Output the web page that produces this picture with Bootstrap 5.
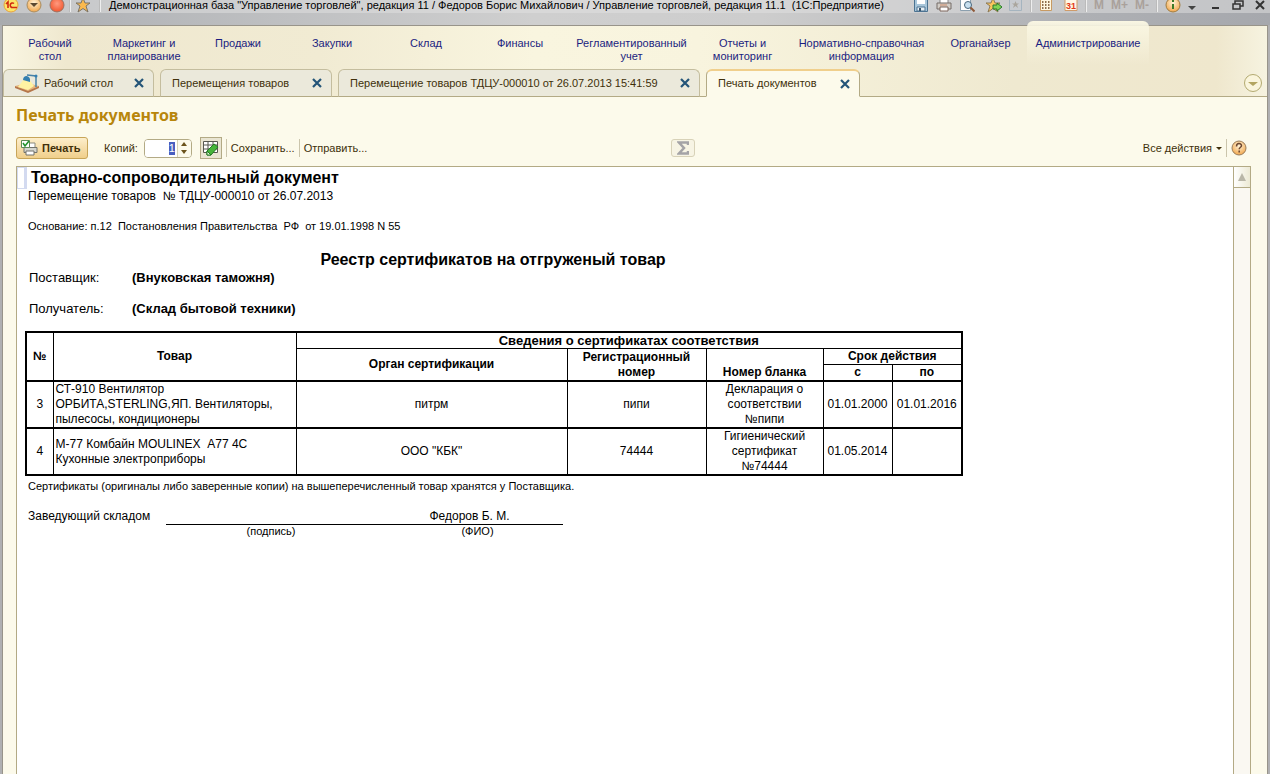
<!DOCTYPE html>
<html lang="ru">
<head>
<meta charset="utf-8">
<meta name="viewport" content="width=device-width, initial-scale=1">
<title>Печать документов</title>
<link href="https://cdn.jsdelivr.net/npm/bootstrap@5.3.0/dist/css/bootstrap.min.css" rel="stylesheet">
<style>
:root{--ink:#40300a;--navy:#1b1d80;--line:#b3aa85;--paper:#fcfaeb}
body{font-family:"Liberation Sans",Arial,sans-serif;font-size:11px;line-height:13px;color:var(--ink);background:#b0b0b2;overflow:hidden}
button,input{font:inherit;color:inherit}
.app-window{min-height:100vh}
.title-strip{height:25px;padding:0 5px 15px 3px;background:linear-gradient(90deg,#a9abae 0,#b4b6b9 10%,#cfcfcf 42%,#cdcdcd 60%,#aeb0b4 85%,#a6a8ad 100%);box-shadow:inset 0 13px #e2e2e280;color:#000}
.title-strip button,.plain-btn{border:0;background:none;padding:0;display:flex;align-items:center;line-height:13px}
.title-strip .quick{gap:7px}
.title-strip .sys{gap:7px}
.app-title{font-size:11px;line-height:14px;white-space:nowrap}
.bar-sep{width:1px;height:14px;background:#bbb;border-right:1px solid #eee;box-sizing:content-box}
.mem{font-size:12px;font-weight:bold;color:#aaa19b}
.shell{margin:0 2px;border:solid #98948a;border-width:1px 1px 0 1px;background:var(--paper)}
.head-area{background:linear-gradient(90deg,#faf6e2 0,#efe8cf 5%,#f1ebd3 25%,#f9f5df 42%,#f8f4de 55%,#efe9d0 80%,#efe7cd 96%,#f6f3e0 100%);border-bottom:1px solid var(--line)}
.sections{height:43px}
.sections a{color:var(--navy);text-decoration:none;text-align:center;padding-top:11px;flex:0 0 auto}
.sec-a{width:94px}.sec-b{width:129px}.sec-c{width:93px}.sec-d{width:145px}.sec-e{width:122px}
.sections a.chosen{margin-top:-5px;padding-top:16px;border-radius:6px 6px 0 0;background:linear-gradient(#faf7e3,#f3eed800);height:44px}
.tabs-row{height:28px;gap:6px;margin-bottom:-1px}
.doc-tab{height:28px;background:#ebe9db;border:1px solid #c4bd9e;border-bottom-color:var(--line);border-radius:6px 6px 0 0;padding:0 9px 0 11px;color:var(--ink);flex:0 0 auto}
.doc-tab.current{background:var(--paper);border-color:var(--line);border-top:2px solid #f0cf8c;border-bottom-color:var(--paper)}
.doc-tab a{color:inherit;text-decoration:none;white-space:nowrap}
.tab-1{width:151px}.tab-2{width:172px}.tab-3{width:362px}.tab-4{width:154px}
.work{padding:9px 16px 0 13px}
.form-title{font:bold 16px/18px "Noto Sans",Tahoma,sans-serif;color:#b8860b;margin:0}
.tools{height:24px;margin:12px 0 6px;white-space:nowrap}
.tools-left{flex:0 0 53%}
.print-btn{width:72px;height:22px;padding:0 4px;border:1px solid #c8a558;border-radius:3px;background:linear-gradient(#fdeecb,#f0cf8b);font-weight:bold;color:#40300a}
.copies{width:48px;height:19px;margin-left:6px;border:1px solid var(--line);border-radius:4px;background:#fff;overflow:hidden}
.copies input{width:32px;border:0;outline:0;padding:0 2px 0 0;text-align:right;background:#fff}
.copies input::selection{background:#4a5fc0;color:#fff}
.spin{width:15px;border-left:1px solid #d8d2b6;background:var(--paper)}
.spin button{border:0;padding:0;background:none;height:8px;display:flex;align-items:center;justify-content:center}
.edit-btn{width:22px;height:22px;padding:0;border:1px solid var(--line);background:#e9e5d2}
.tool-sep{width:1px;height:18px;background:#cbc5ac}
.sum-btn{width:24px;height:18px;border:1px solid #d8d2b8;border-radius:3px;background:#f7f4e4;padding:0;display:flex;align-items:center;justify-content:center}
.sheet-frame{border:1px solid var(--line);border-bottom:0;background:#fff;color:#000;min-height:calc(100vh - 166px)}
.scroll-track{width:17px;border-left:1px solid var(--line);background:#faf8f2;flex:0 0 auto}
.scroll-track button{width:16px;height:21px;border:0;border-bottom:1px solid var(--line);background:linear-gradient(90deg,#fff,#ece9d4);padding:0;display:flex;align-items:center;justify-content:center}
.cursor-cell{width:10px;height:22px;border:1px solid #d3daf0;border-right-width:3px;flex:0 0 auto}
.sheet{padding:0 0 20px 8px;min-width:0}
.head-line{height:22px;margin-left:-8px}
.doc-name{font-size:16px;line-height:22px;font-weight:bold;margin:0 0 0 4px}
.note-line{padding-left:3px}
.t12{font-size:12px;line-height:15px}
.t13{font-size:13px;line-height:15px}
.reg-title{font-size:16px;line-height:18px;font-weight:bold;text-align:center;margin:18px 0 1px;width:936px}
.party{display:flex;padding-left:4px}
.party dt{width:103px;font-weight:normal}
.party dd{margin:0;font-weight:bold}
.certs{width:937px;table-layout:fixed;border-collapse:collapse;border:2px solid #000;font-size:12px;line-height:15px;text-align:center;margin-top:15px;color:#000}
.certs th,.certs td{border:1px solid #000;padding:0 1px;vertical-align:middle}
.certs tbody tr{border-top:2px solid #000;height:46px}
.certs .goods{text-align:left;padding-left:2px}
.certs thead tr{height:16px}
.certs .group{font-size:13px}
.after-table{margin-top:4px}
.sign-row{padding-left:3px;margin-top:16px}
.role{width:138px}
.sign-grid{display:grid;grid-template-columns:210px 187px;text-align:center}
.sign-grid .filled{border-bottom:1px solid #000}
.sign-grid .fio{padding-left:16px}
</style>
<script src="https://cdn.jsdelivr.net/npm/bootstrap@5.3.0/dist/js/bootstrap.bundle.min.js"></script>
</head>
<body>
<svg class="position-absolute" width="0" height="0" aria-hidden="true">
<defs>
<radialGradient id="or" cx=".5" cy=".35" r=".7"><stop offset="0" stop-color="#fff3d8"/><stop offset="1" stop-color="#f0a040"/></radialGradient>
<radialGradient id="rd" cx=".5" cy=".4" r=".6"><stop offset="0" stop-color="#ff9a80"/><stop offset="1" stop-color="#f0562e"/></radialGradient>
<symbol id="cross" viewBox="0 0 10 10"><path d="M1 1l8 8M9 1L1 9" stroke="#235478" stroke-width="2.2"/></symbol>
</defs>
</svg>
<div class="app-window">
<header class="title-strip d-flex align-items-center">
  <div class="quick d-flex align-items-center">
  <button aria-label="1С"><svg width="16" height="16"><circle cx="8" cy="8" r="7" fill="#fce46a" stroke="#e8a33c"/><path d="M3 7l2-2v6M11 6.500a2.300 2.300 0 1 0-1 4h4" fill="none" stroke="#d22a12" stroke-width="1.600"/></svg></button>
  <button aria-label="Главное меню"><svg width="16" height="16"><circle cx="8" cy="8" r="7" fill="url(#or)" stroke="#a98d62"/><path d="M4 6h8l-4 4z" fill="#5c4a32"/></svg></button>
  <button aria-label="Стоп"><svg width="16" height="16"><circle cx="8" cy="8" r="7" fill="url(#rd)" stroke="#987466"/></svg></button>
  </div>
  <span class="bar-sep ms-1"></span>
  <button class="ms-1" aria-label="Избранное"><svg width="16" height="16"><path d="M8 1l2 5h5l-4 3 2 6-5-3.500-5 3.500 2-6-4-3h5z" fill="#fbb94d" stroke="#7d7464"/></svg></button>
  <span class="bar-sep mx-2"></span>
  <span class="app-title">Демонстрационная база "Управление торговлей", редакция 11 / Федоров Борис Михайлович / Управление торговлей, редакция 11.1&nbsp; (1С:Предприятие)</span>
  <div class="sys ms-auto d-flex align-items-center">
    <button aria-label="Сохранить"><svg width="16" height="16"><path d="M1.500 1.500h13v13h-13z" fill="#a8c6da" stroke="#4c7391"/><path d="M4 2h8v5H4z" fill="#fff"/><path d="M4 10h8v4H4z" fill="#e9f0f4" stroke="#4c7391"/><path d="M6 11h2v3H6z" fill="#38566e"/></svg></button>
    <button aria-label="Печать"><svg width="16" height="16"><path d="M4 1h8v6H4z" fill="#fff" stroke="#888"/><path d="M1 6h14v6H1z" fill="#d2cdc6" stroke="#746d68"/><path d="M4 10h8v4H4z" fill="#fff" stroke="#7c645b"/><path d="M4 8h7" stroke="#d08c6a"/></svg></button>
    <button aria-label="Предварительный просмотр"><svg width="16" height="16"><path d="M1.500.5h10v13h-10z" fill="#fff" stroke="#8b9fae"/><circle cx="9" cy="8" r="3.500" fill="#c8e0f0" stroke="#49677d"/><path d="M11.500 10.500l4 4" stroke="#8f5a3a" stroke-width="2"/></svg></button>
    <button class="ms-1" aria-label="Добавить в избранное"><svg width="16" height="16"><path d="M7 1l2 5h5l-4 3 2 6-5-3.500L2 15l2-6-4-3h5z" fill="#fbc55d" stroke="#8f7b55"/><path d="M7 8h4V6l5 4-5 4v-2H7z" fill="#82d454" stroke="#27782b"/></svg></button>
    <button aria-label="Список избранного"><svg width="14" height="14"><path d="M.5.5h12v12H.5z" fill="#c8cbd0" stroke="#a5b4bf"/><path d="M6.500 3l1 2.500H10L8 7l1 3-2.500-2L4 10l1-3-2-1.500h2.500z" fill="#aaa59d"/></svg></button>
    <span class="bar-sep"></span>
    <button aria-label="Калькулятор"><svg width="14" height="14"><path d="M1.500.5h11v12h-11z" fill="#fff7df" stroke="#c79a63"/><path d="M3 4h8M3 7h8M3 10h8" stroke="#69431f" stroke-width="1.500" stroke-dasharray="1.500 1.500"/></svg></button>
    <button class="ms-1" aria-label="Календарь"><svg width="14" height="14"><path d="M1 .5h12v12H1z" fill="#fff7e5" stroke="#ce9b6a"/><text x="7" y="11" font-size="9" font-weight="bold" text-anchor="middle" fill="#e23917">31</text></svg></button>
    <span class="bar-sep"></span>
    <button class="mem">M</button><button class="mem">M+</button><button class="mem">M-</button>
    <span class="bar-sep"></span>
    <button aria-label="О программе"><svg width="16" height="16"><circle cx="8" cy="8" r="7" fill="url(#or)" stroke="#a07d42"/><path d="M8 7v5M8 3v2" stroke="#3d7a28" stroke-width="2"/></svg></button>
    <button aria-label="Ещё"><svg width="8" height="12"><path d="M0 7h8l-4 4z" fill="#444"/></svg></button>
    <button class="ms-2" aria-label="Свернуть"><svg width="10" height="12"><path d="M1 9h7" stroke="#333" stroke-width="2"/></svg></button>
    <button class="ms-1" aria-label="Восстановить"><svg width="12" height="12"><path d="M1 5h7v5H1zM3 5V2h8v5H8" fill="none" stroke="#333" stroke-width="1.500"/></svg></button>
    <button class="ms-1" aria-label="Закрыть"><svg width="10" height="10"><path d="M1 1l8 8M9 1L1 9" stroke="#333" stroke-width="2"/></svg></button>
  </div>
</header>
<div class="shell">
  <div class="head-area">
    <nav class="sections d-flex" aria-label="Разделы">
      <a href="#" class="sec-a">Рабочий<br>стол</a>
      <a href="#" class="sec-a">Маркетинг и<br>планирование</a>
      <a href="#" class="sec-a">Продажи</a>
      <a href="#" class="sec-a">Закупки</a>
      <a href="#" class="sec-a">Склад</a>
      <a href="#" class="sec-a">Финансы</a>
      <a href="#" class="sec-b">Регламентированный<br>учет</a>
      <a href="#" class="sec-c">Отчеты и<br>мониторинг</a>
      <a href="#" class="sec-d">Нормативно-справочная<br>информация</a>
      <a href="#" class="sec-c">Органайзер</a>
      <a href="#" class="sec-e chosen">Администрирование</a>
    </nav>
    <div class="tabs-row d-flex">
      <div class="doc-tab tab-1 d-flex align-items-center justify-content-between">
        <a href="#" class="d-flex align-items-center gap-1"><svg width="25" height="20"><path d="M0 13l12-3 12 3-11 6z" fill="#e8b77d"/><path d="M0 13v2l13 5 11-5v-2l-11 5z" fill="#b5764a"/><path d="M9 6L3 14l10 3 6-4-5-7z" fill="#fff3a3"/><path d="M8 7c0-4 5-6 7-1v3z" fill="#347fb0"/><path d="M12 2l9 1v11" fill="none" stroke="#4681a8" stroke-width="1.500"/><circle cx="21" cy="3" r="1.500" fill="#347fb0"/></svg>Рабочий стол</a>
        <button class="plain-btn" aria-label="Закрыть"><svg width="10" height="10"><use href="#cross"/></svg></button>
      </div>
      <div class="doc-tab tab-2 d-flex align-items-center justify-content-between">
        <a href="#">Перемещения товаров</a><button class="plain-btn" aria-label="Закрыть"><svg width="10" height="10"><use href="#cross"/></svg></button>
      </div>
      <div class="doc-tab tab-3 d-flex align-items-center justify-content-between">
        <a href="#">Перемещение товаров ТДЦУ-000010 от 26.07.2013 15:41:59</a><button class="plain-btn" aria-label="Закрыть"><svg width="10" height="10"><use href="#cross"/></svg></button>
      </div>
      <div class="doc-tab current tab-4 d-flex align-items-center justify-content-between">
        <a href="#">Печать документов</a><button class="plain-btn" aria-label="Закрыть"><svg width="10" height="10"><use href="#cross"/></svg></button>
      </div>
      <button class="plain-btn ms-auto me-1" aria-label="Список окон"><svg width="20" height="20"><circle cx="10" cy="10" r="8.500" fill="#faf5dc" stroke="#b3aa70"/><path d="M5 9h10l-5 4z" fill="#b3a560"/></svg></button>
    </div>
  </div>
  <main class="work">
    <h1 class="form-title">Печать документов</h1>
    <div class="tools d-flex align-items-center">
      <div class="tools-left d-flex align-items-center">
        <button class="print-btn d-flex align-items-center gap-1"><svg width="17" height="16" class="flex-shrink-0"><path d="M6 3h8v5H6z" fill="#fff" stroke="#8b8b80"/><path d="M3 7.500h13v5H3z" fill="#d5d6cf" stroke="#73736c"/><path d="M5 11h8v4H5z" fill="#fff" stroke="#73736c"/><path d="M.5.5h8v7h-8z" fill="#fff" stroke="#5d8b55"/><path d="M2 3l2 3 4-5" fill="none" stroke="#20932b" stroke-width="1.600"/></svg>Печать</button>
        <label for="copies" class="ms-3">Копий:</label>
        <div class="copies d-flex">
          <input id="copies" type="text" value="1">
          <div class="spin d-flex flex-column"><button aria-label="Больше"><svg width="6" height="4"><path d="M0 4h6L3 0z" fill="#6b531c"/></svg></button><button aria-label="Меньше"><svg width="6" height="4"><path d="M0 0h6L3 4z" fill="#6b531c"/></svg></button></div>
        </div>
        <button class="edit-btn ms-2" aria-label="Редактирование"><svg width="18" height="18"><path d="M1.500 2.500h14v11h-14zM1 6h15M1 10h15M6 2v12M11 2v12" fill="#fff" stroke="#56564e"/><path d="M5 12l7-7 4 3-7 8H5z" fill="#46b43a" stroke="#237b25"/><path d="M5 12l4 4H5z" fill="#e9f7dd" stroke="#237b25"/></svg></button>
        <span class="tool-sep mx-1"></span>
        <button class="plain-btn">Сохранить...</button>
        <span class="tool-sep mx-1"></span>
        <button class="plain-btn">Отправить...</button>
      </div>
      <button class="sum-btn" aria-label="Сумма"><svg width="12" height="14"><path d="M11 4V1.500H2L7 7l-5 5.500h9V10" fill="none" stroke="#a4a3a6" stroke-width="2.500"/></svg></button>
      <div class="ms-auto d-flex align-items-center">
        <button class="plain-btn gap-1">Все действия<svg width="6" height="3"><path d="M0 0h6L3 3z" fill="#40300a"/></svg></button>
        <span class="tool-sep mx-1"></span>
        <button class="plain-btn me-1" aria-label="Справка"><svg width="16" height="16"><circle cx="8" cy="8" r="7" fill="url(#or)" stroke="#9a7d5c"/><path d="M5.500 6.500c0-4 5-3.500 5-.8 0 1.500-2.300 1.600-2.300 3.500M8.200 10.500v2" fill="none" stroke="#6b4630" stroke-width="1.500"/></svg></button>
      </div>
    </div>
    <div class="sheet-frame d-flex">
      <div class="sheet flex-grow-1">
        <div class="head-line d-flex"><span class="cursor-cell"></span><h2 class="doc-name">Товарно-сопроводительный документ</h2></div>
        <div class="note-line t12">Перемещение товаров&nbsp; № ТДЦУ-000010 от 26.07.2013</div>
        <div class="note-line mt-3">Основание: п.12&nbsp; Постановления Правительства&nbsp; РФ&nbsp; от 19.01.1998 N 55</div>
        <h3 class="reg-title">Реестр сертификатов на отгруженый товар</h3>
        <dl class="party t13 mb-3"><dt>Поставщик:</dt><dd>(Внуковская таможня)</dd></dl>
        <dl class="party t13 mb-0"><dt>Получатель:</dt><dd>(Склад бытовой техники)</dd></dl>
        <table class="certs">
          <colgroup><col style="width:27px"><col style="width:243px"><col style="width:271px"><col style="width:139px"><col style="width:117px"><col style="width:69px"><col style="width:70px"></colgroup>
          <thead>
            <tr><th rowspan="3">№</th><th rowspan="3">Товар</th><th colspan="5" class="group">Сведения о сертификатах соответствия</th></tr>
            <tr><th rowspan="2">Орган сертификации</th><th rowspan="2">Регистрационный номер</th><th rowspan="2" class="align-bottom">Номер бланка</th><th colspan="2">Срок действия</th></tr>
            <tr><th>с</th><th>по</th></tr>
          </thead>
          <tbody>
            <tr><td>3</td><td class="goods">СТ-910 Вентилятор ОРБИТА,STERLING,ЯП. Вентиляторы, пылесосы, кондиционеры</td><td>питрм</td><td>пипи</td><td>Декларация о соответствии №пипи</td><td>01.01.2000</td><td>01.01.2016</td></tr>
            <tr><td>4</td><td class="goods">М-77 Комбайн MOULINEX&nbsp; А77 4С<br>Кухонные электроприборы</td><td>ООО "КБК"</td><td>74444</td><td>Гигиенический сертификат №74444</td><td>01.05.2014</td><td></td></tr>
          </tbody>
        </table>
        <div class="note-line after-table">Сертификаты (оригиналы либо заверенные копии) на вышеперечисленный товар хранятся у Поставщика.</div>
        <div class="sign-row d-flex">
          <span class="role t12">Заведующий складом</span>
          <div class="sign-grid">
            <span class="filled t12"></span><span class="filled t12">Федоров Б. М.</span>
            <span>(подпись)</span><span class="fio">(ФИО)</span>
          </div>
        </div>
      </div>
      <div class="scroll-track"><button aria-label="Вверх"><svg width="8" height="8"><path d="M0 8h8L4 0z" fill="#b9b6a8"/></svg></button></div>
    </div>
  </main>
</div>
</div>
<script>
const copies = document.getElementById('copies');
copies.focus();
copies.select();
</script>
</body>
</html>
